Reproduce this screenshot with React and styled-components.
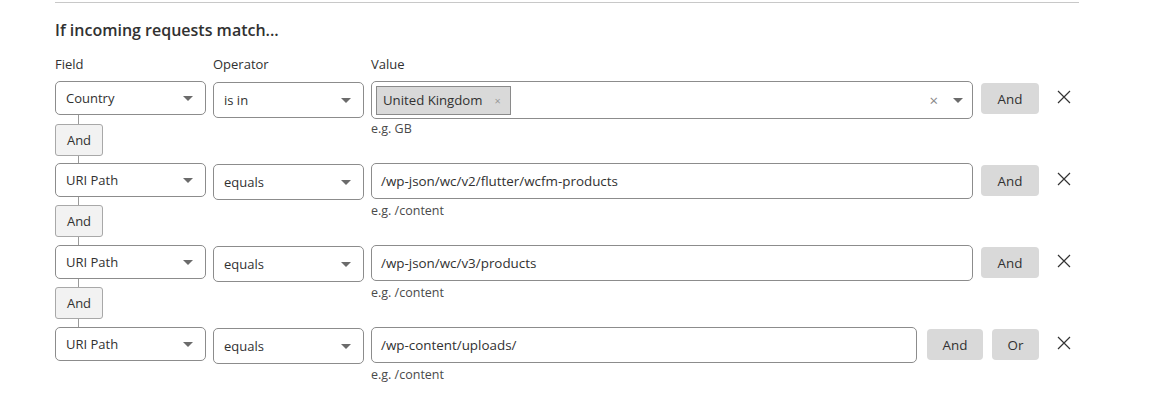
import React from "react";
import styled, { createGlobalStyle } from "styled-components";

const GlobalStyle = createGlobalStyle`
  html, body {
    margin: 0;
    padding: 0;
    background: #fff;
  }
  body {
    font-family: "Open Sans", "Noto Sans", sans-serif;
    color: #313131;
  }
`;

const Page = styled.div`
  width: 1024px;
  padding: 2px 0 0 55px;
`;

const Divider = styled.div`
  height: 1px;
  background: #c8c8c8;
`;

const Title = styled.h3`
  margin: 16px 0 0;
  font-size: 16px;
  font-weight: 600;
  line-height: 22px;
  color: #313131;
`;

const Labels = styled.div`
  display: grid;
  grid-template-columns: 151px 151px 1fr;
  column-gap: 7px;
  margin-top: 14px;
  font-size: 13px;
  line-height: 18px;
`;

const Rule = styled.div`
  display: flex;
  align-items: flex-start;
  gap: 7px;
  margin-top: ${(p) => (p.$first ? "8px" : "0")};
`;

const FieldCol = styled.div`
  width: 151px;
  display: flex;
  flex-direction: column;
  align-items: flex-start;
`;

const SelectBox = styled.div`
  box-sizing: border-box;
  width: 151px;
  height: ${(p) => (p.$tall ? "36px" : "34px")};
  margin-top: ${(p) => (p.$tall ? "1px" : "0")};
  border: 1px solid #8c8c8c;
  border-radius: 5px;
  display: flex;
  align-items: center;
  justify-content: space-between;
  padding: 0 12px 0 10px;
  font-size: 13px;
  color: #313131;
  background: #fff;
`;

const Caret = styled.span`
  width: 0;
  height: 0;
  border-left: 5px solid transparent;
  border-right: 5px solid transparent;
  border-top: 5px solid #6b6b6b;
`;

const Line = styled.div`
  width: 1px;
  height: ${(p) => p.$h}px;
  margin-left: 23px;
  background: #9a9a9a;
`;

const ConnectorButton = styled.button`
  box-sizing: border-box;
  width: 48px;
  height: 32px;
  border: 1px solid #a8a8a8;
  border-radius: 3px;
  background: #f2f2f2;
  font-family: inherit;
  font-size: 13px;
  color: #313131;
  padding: 0;
`;

const ValueCol = styled.div`
  flex: 1;
  min-width: 0;
  display: flex;
  flex-direction: column;
`;

const ValueBox = styled.div`
  box-sizing: border-box;
  height: ${(p) => (p.$tall ? "38px" : "36px")};
  border: 1px solid #8c8c8c;
  border-radius: 5px;
  display: flex;
  align-items: center;
  padding: 0 9px 0 ${(p) => (p.$tall ? "4px" : "9px")};
  font-size: 13.4px;
  color: #313131;
  background: #fff;
`;

const Tag = styled.span`
  box-sizing: border-box;
  height: 29px;
  display: inline-flex;
  align-items: center;
  gap: 12px;
  padding: 0 9px 0 6px;
  border: 1px solid #8a8a8a;
  background: #d9d9d9;
  font-size: 13.2px;
  color: #313131;
`;

const TagX = styled.span`
  font-size: 11px;
  color: #9a9a9a;
`;

const ValueEnd = styled.div`
  margin-left: auto;
  display: flex;
  align-items: center;
  gap: 15px;
  color: #888;
  font-size: 15px;
`;

const Hint = styled.div`
  margin-top: ${(p) => (p.$tall ? "1px" : "3px")};
  font-size: 12.5px;
  line-height: 18px;
  color: #4a4a4a;
`;

const Actions = styled.div`
  display: flex;
  align-items: center;
  gap: 9px;
  margin-top: 2px;
  padding-left: ${(p) => (p.$wide ? "3px" : "1px")};
`;

const ActionButton = styled.button`
  box-sizing: border-box;
  width: ${(p) => p.$w}px;
  height: 31px;
  border: none;
  border-radius: 4px;
  background: #d9d9d9;
  font-family: inherit;
  font-size: 13.4px;
  color: #313131;
  padding: 0;
`;

const Remove = styled.button`
  border: none;
  background: none;
  padding: 0;
  margin-left: 2px;
  width: 31px;
  height: 31px;
  display: flex;
  align-items: center;
  justify-content: center;
`;

function CloseIcon() {
  return (
    <svg width="14" height="14" viewBox="0 0 14 14">
      <path d="M1 1 L13 13 M13 1 L1 13" stroke="#333" strokeWidth="1.2" />
    </svg>
  );
}

const rules = [
  { field: "Country", op: "is in", tag: "United Kingdom", hint: "e.g. GB" },
  { field: "URI Path", op: "equals", value: "/wp-json/wc/v2/flutter/wcfm-products", hint: "e.g. /content" },
  { field: "URI Path", op: "equals", value: "/wp-json/wc/v3/products", hint: "e.g. /content" },
  { field: "URI Path", op: "equals", value: "/wp-content/uploads/", hint: "e.g. /content", last: true },
];

export default function App() {
  return (
    <Page>
      <GlobalStyle />
      <Divider />
      <Title>If incoming requests match...</Title>
      <Labels>
        <span>Field</span>
        <span>Operator</span>
        <span>Value</span>
      </Labels>
      {rules.map((r, i) => (
        <Rule key={i} $first={i === 0}>
          <FieldCol>
            <SelectBox>
              {r.field}
              <Caret />
            </SelectBox>
            {!r.last && (
              <>
                <Line $h={i === 0 ? 9 : 8} />
                <ConnectorButton>And</ConnectorButton>
                <Line $h={i === 0 ? 7 : 8} />
              </>
            )}
          </FieldCol>
          <FieldCol>
            <SelectBox $tall>
              {r.op}
              <Caret />
            </SelectBox>
          </FieldCol>
          <ValueCol>
            {r.tag ? (
              <ValueBox $tall>
                <Tag>
                  {r.tag}
                  <TagX>×</TagX>
                </Tag>
                <ValueEnd>
                  <span>×</span>
                  <Caret />
                </ValueEnd>
              </ValueBox>
            ) : (
              <ValueBox>{r.value}</ValueBox>
            )}
            <Hint $tall={!!r.tag}>{r.hint}</Hint>
          </ValueCol>
          <Actions $wide={r.last}>
            <ActionButton $w={r.last ? 56 : 58}>And</ActionButton>
            {r.last && <ActionButton $w={47}>Or</ActionButton>}
          </Actions>
          <Remove>
            <CloseIcon />
          </Remove>
        </Rule>
      ))}
    </Page>
  );
}
